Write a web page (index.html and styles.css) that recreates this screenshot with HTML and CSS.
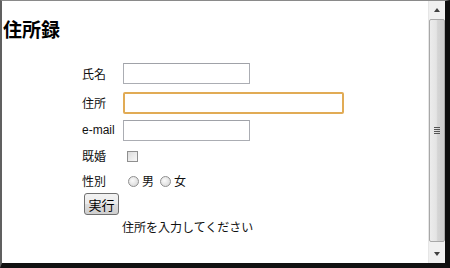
FILE: index.html
```html
<!DOCTYPE html>
<html lang="ja">
<head>
<meta charset="utf-8">
<title>住所録</title>
<link rel="stylesheet" href="styles.css">
</head>
<body>
<div class="window">
  <div class="content">
    <h1 class="title">住所録</h1>
    <form class="form">
      <label class="lbl r1">氏名</label>
      <div class="cell r1"><input class="text short" type="text"></div>
      <label class="lbl r2">住所</label>
      <div class="cell r2"><input class="text long focus" type="text"></div>
      <label class="lbl r3 latin">e-mail</label>
      <div class="cell r3"><input class="text short" type="text"></div>
      <label class="lbl r4">既婚</label>
      <div class="cell r4"><span class="check"></span></div>
      <label class="lbl r5">性別</label>
      <div class="cell r5 radios"><span class="radio"></span><span class="opt">男</span><span class="radio"></span><span class="opt">女</span></div>
      <div class="cell r6"><button class="btn" type="button">実行</button></div>
      <div class="cell r6"></div>
      <div class="cell r7"></div>
      <div class="cell r7 msg">住所を入力してください</div>
    </form>
  </div>
  <div class="scrollbar">
    <div class="arrow up"></div>
    <div class="thumb"><div class="grip"><i></i><i></i><i></i><i></i></div></div>
    <div class="arrow down"></div>
  </div>
</div>
</body>
</html>
```

FILE: styles.css
```css
html, body {
  margin: 0;
  padding: 0;
  background: #fff;
}
.window {
  width: 450px;
  height: 268px;
  box-sizing: border-box;
  border-top: 1px solid #8a8a8a;
  border-left: 2px solid #606060;
  border-right: 5px solid #0e0e0e;
  border-bottom: 5px solid #111;
  display: flex;
  background: #fff;
  overflow: hidden;
}
.content {
  flex: 1;
  font-family: "Noto Sans CJK JP", "Liberation Sans", sans-serif;
  font-size: 12px;
  color: #111;
}
.title {
  margin: 17px 0 0 1px;
  font-size: 19px;
  line-height: 22px;
  font-weight: bold;
  color: #000;
}
.form {
  margin: 23px 0 0 80px;
  display: grid;
  grid-template-columns: 41px auto;
  grid-template-rows: 29px 28px 28px 25px 20px 27px auto;
}
.lbl {
  display: flex;
  align-items: flex-start;
  line-height: 21px;
}
.cell {
  display: flex;
  align-items: flex-start;
}
.latin {
  font-family: "Liberation Sans", Arial, sans-serif;
  font-size: 12px;
}
.text {
  box-sizing: border-box;
  margin: 0;
  height: 21px;
  border: 1px solid #abadb3;
  border-top-color: #a0a2a8;
  background: #fff;
  padding: 0 3px;
  outline: none;
}
.short { width: 127px; }
.long {
  width: 221px;
  height: 22px;
  border: 2px solid #e1ab55;
  border-radius: 2px;
}
.lbl.r4 { line-height: 16px; }
.lbl.r5 { line-height: 16px; }
.check {
  display: block;
  margin: 3px 0 0 4px;
  width: 9px;
  height: 9px;
  border: 1px solid #8f8f8f;
  background: linear-gradient(135deg, #dcdcdc, #f8f8f8);
}
.radios {
  align-items: center;
  height: 16px;
}
.radio {
  display: block;
  margin: 0 3px 0 5px;
  width: 9px;
  height: 9px;
  border: 1px solid #8f8f8f;
  border-radius: 50%;
  background: radial-gradient(circle at 40% 40%, #fafafa, #d2d2d2);
}
.opt {
  margin-right: 1px;
  line-height: 16px;
}
.btn {
  margin: 0 0 0 2px;
  box-sizing: border-box;
  width: 35px;
  height: 22px;
  padding: 0;
  font-family: "Noto Sans CJK JP", sans-serif;
  font-size: 13px;
  color: #000;
  border: 1px solid #707070;
  border-radius: 3px;
  background: linear-gradient(#f2f2f2 0%, #ebebeb 50%, #dddddd 51%, #cfcfcf 100%);
}
.msg {
  line-height: 14px;
  margin-left: -1px;
}
.scrollbar {
  width: 17px;
  display: flex;
  flex-direction: column;
  background: #f0f0f0;
  border-left: 1px solid #e6e6e6;
  box-sizing: border-box;
}
.arrow {
  height: 17px;
  position: relative;
}
.arrow::after {
  content: "";
  position: absolute;
  left: 5px;
  border-left: 3.5px solid transparent;
  border-right: 3.5px solid transparent;
}
.up::after {
  top: 7px;
  border-bottom: 4px solid #404040;
}
.down::after {
  top: 6px;
  border-top: 4px solid #404040;
}
.thumb {
  flex: 1;
  margin: 1px 0 4px 0;
  border: 1px solid #a8a8a8;
  border-radius: 2px;
  background: linear-gradient(90deg, #ececec 0%, #e4e4e4 45%, #d4d4d4 55%, #cfcfcf 100%);
  display: flex;
  align-items: center;
  justify-content: center;
}
.grip {
  display: flex;
  flex-direction: column;
  gap: 1px;
}
.grip i {
  display: block;
  width: 6px;
  height: 1px;
  background: #555;
}
```
